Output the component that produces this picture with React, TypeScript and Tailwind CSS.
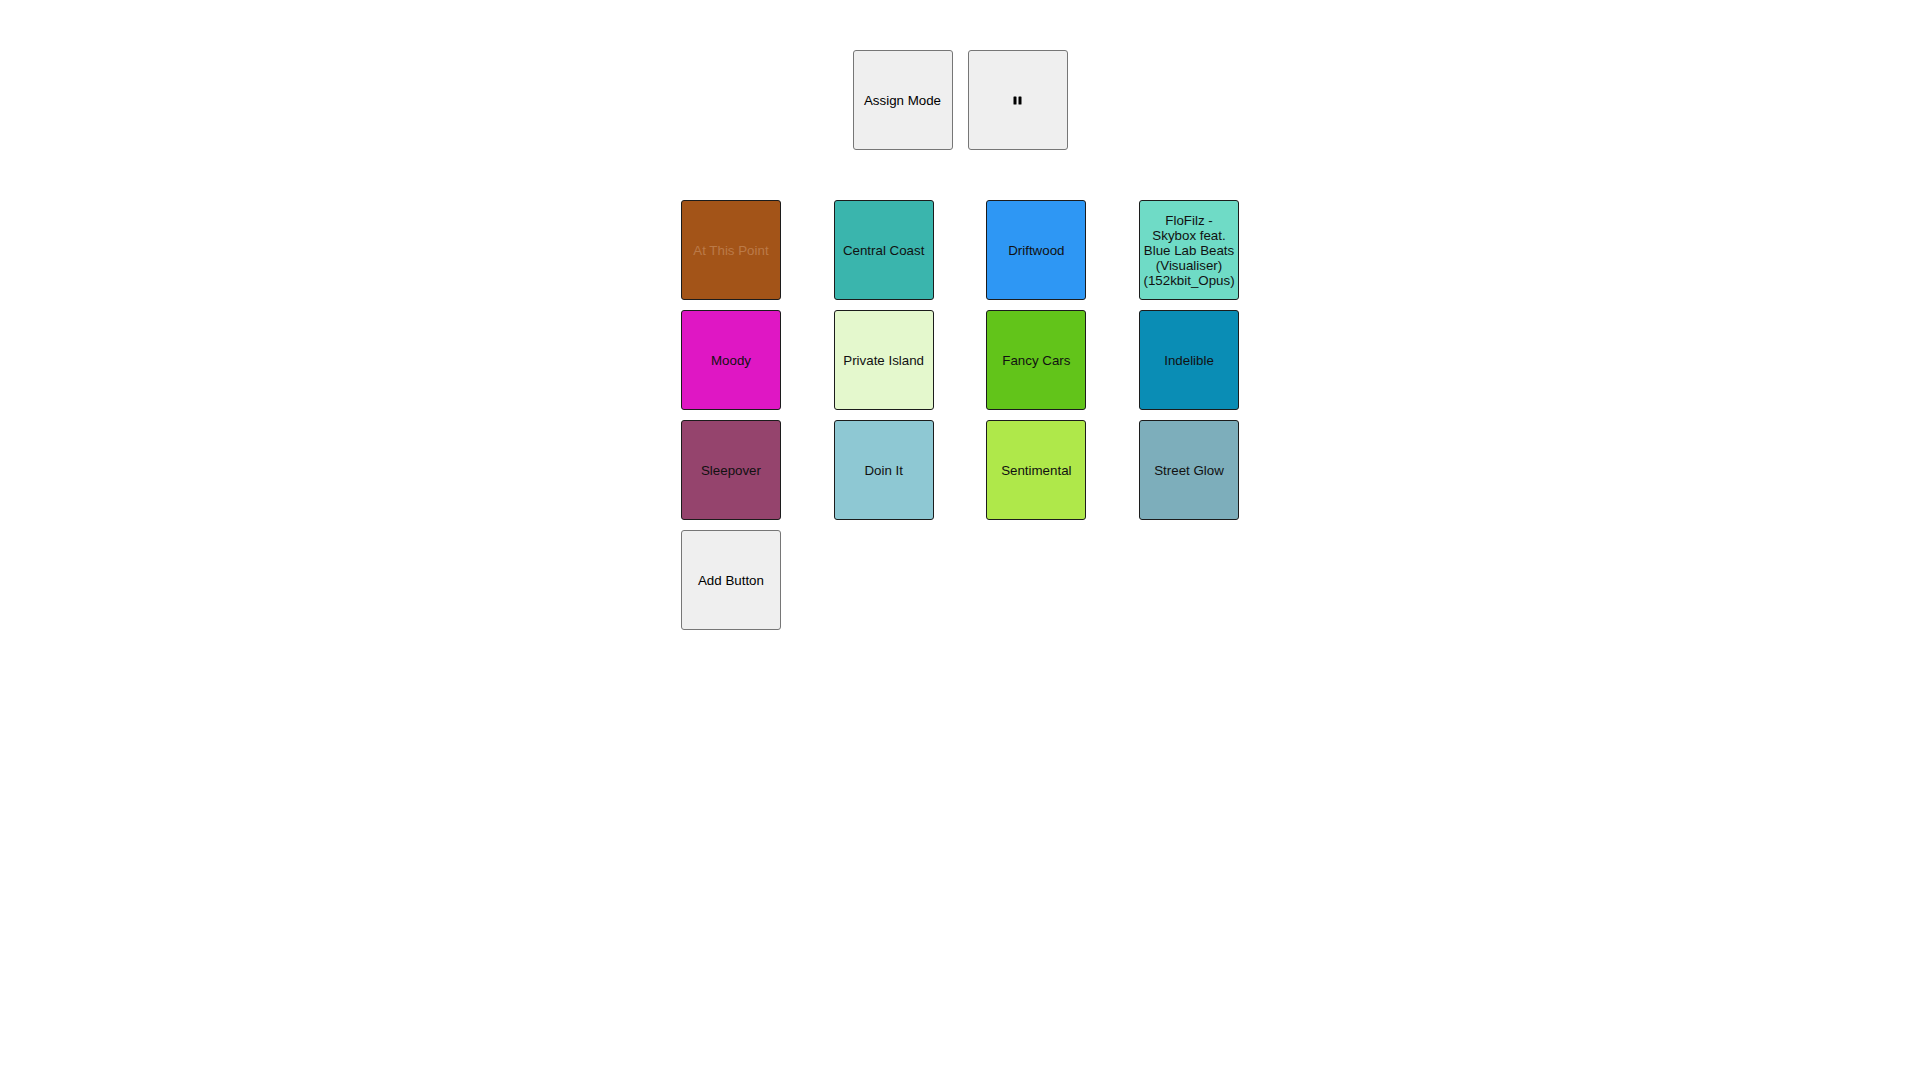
import React from 'react';

type Pad = { label: string; bg: string; fg?: string };

const pads: Pad[] = [
  { label: 'At This Point', bg: '#a35418', fg: '#bb7a48' },
  { label: 'Central Coast', bg: '#3ab5ad' },
  { label: 'Driftwood', bg: '#2e97f4' },
  { label: 'FloFilz - Skybox feat. Blue Lab Beats (Visualiser) (152kbit_Opus)', bg: '#6fdbc6' },
  { label: 'Moody', bg: '#df17c4' },
  { label: 'Private Island', bg: '#e4f8cd' },
  { label: 'Fancy Cars', bg: '#62c41a' },
  { label: 'Indelible', bg: '#0a8db5' },
  { label: 'Sleepover', bg: '#95446d' },
  { label: 'Doin It', bg: '#8ec8d3' },
  { label: 'Sentimental', bg: '#afe84a' },
  { label: 'Street Glow', bg: '#7daebb' },
];

const base =
  "w-[100px] h-[100px] rounded-[3px] border px-[6px] text-[13.33px] leading-[normal] font-['Liberation_Sans',Arial,sans-serif] flex items-center justify-center text-center";

function GrayButton({ children }: { children: React.ReactNode }) {
  return (
    <button className={`${base} bg-[#efefef] border-[#767676] text-black`}>
      {children}
    </button>
  );
}

export default function App() {
  return (
    <div className="min-h-screen bg-white flex flex-col items-center pt-[50px]">
      <div className="flex gap-[15px]">
        <GrayButton>Assign Mode</GrayButton>
        <GrayButton>
          <svg width="9" height="9" viewBox="0 0 9 9">
            <rect x="0.5" y="0.5" width="3" height="8" rx="0.6" fill="#000" />
            <rect x="5.5" y="0.5" width="3" height="8" rx="0.6" fill="#000" />
          </svg>
        </GrayButton>
      </div>

      <div className="mt-[50px] grid grid-cols-[repeat(4,100px)] gap-x-[52.7px] gap-y-[10px]">
        {pads.map((p) => (
          <button
            key={p.label}
            className={`${base} border-[#1c1c1c]`}
            style={{ backgroundColor: p.bg, color: p.fg ?? '#111' }}
          >
            {p.label}
          </button>
        ))}
        <GrayButton>Add Button</GrayButton>
      </div>
    </div>
  );
}
